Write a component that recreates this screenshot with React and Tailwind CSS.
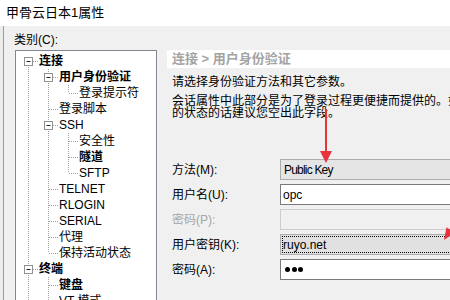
import React from 'react';

const rows = [
  { t: '连接', b: true, own: 'first', box: true, cols: [] },
  { t: '用户身份验证', b: true, own: 'mid', box: true, cols: ['pipe'] },
  { t: '登录提示符', own: 'last', cols: ['pipe', 'pipe'] },
  { t: '登录脚本', own: 'mid', cols: ['pipe'] },
  { t: 'SSH', own: 'mid', box: true, cols: ['pipe'] },
  { t: '安全性', own: 'mid', cols: ['pipe', 'pipe'] },
  { t: '隧道', b: true, own: 'mid', cols: ['pipe', 'pipe'] },
  { t: 'SFTP', own: 'last', cols: ['pipe', 'pipe'] },
  { t: 'TELNET', own: 'mid', cols: ['pipe'] },
  { t: 'RLOGIN', own: 'mid', cols: ['pipe'] },
  { t: 'SERIAL', own: 'mid', cols: ['pipe'] },
  { t: '代理', own: 'mid', cols: ['pipe'] },
  { t: '保持活动状态', own: 'last', cols: ['pipe'] },
  { t: '终端', b: true, own: 'mid', box: true, cols: [] },
  { t: '键盘', b: true, own: 'mid', cols: ['pipe'] },
  { t: 'VT 模式', own: 'mid', cols: ['pipe'] },
];

const DOT = '#a0a0a0';

// one 20x16 slot of the tree's dotted guide lines
const Guide = ({ type, own, box }) => (
  <svg width="20" height="16" className="shrink-0">
    {type === 'pipe' && (
      <line x1="10.5" y1="0" x2="10.5" y2="16" stroke={DOT} strokeDasharray="1 1" />
    )}
    {own && own !== 'first' && (
      <line x1="10.5" y1="0" x2="10.5" y2="8" stroke={DOT} strokeDasharray="1 1" />
    )}
    {own && own !== 'last' && (
      <line x1="10.5" y1="8" x2="10.5" y2="16" stroke={DOT} strokeDasharray="1 1" />
    )}
    {own && (
      <line x1="11" y1="8.5" x2="20" y2="8.5" stroke={DOT} strokeDasharray="1 1" />
    )}
    {box && (
      <>
        <rect x="6.5" y="4.5" width="8" height="8" fill="#fff" stroke="#919191" />
        <line x1="8.5" y1="8.5" x2="12.5" y2="8.5" stroke="#222" />
      </>
    )}
  </svg>
);

const Field = ({ label, disabled, kind, children }) => {
  const box =
    kind === 'combo'
      ? 'bg-[#e5e5e5] border-[#adadad] pl-[3px]'
      : kind === 'button'
      ? 'bg-[#e1e1e1] border-[#adadad] p-[1px] w-[168px]'
      : kind === 'off'
      ? 'bg-[#f0f0f0] border-[#cccccc]'
      : 'bg-white border-[#7a7a7a] pl-[2px]';
  return (
    <div className="flex items-center h-[21px]">
      <div className={`w-[113px] pl-[5px] text-[12px] leading-[16px] ${disabled ? 'text-[#a6a6a6]' : 'text-black'}`}>
        {label}
      </div>
      <div className={`h-[21px] flex-1 border flex items-center text-[12px] ${box}`}>
        {children}
      </div>
    </div>
  );
};

export default function App() {
  return (
    <div className="relative w-[450px] h-[300px] overflow-hidden bg-[#f0f0f0] text-black font-['Liberation_Sans','Noto_Sans_CJK_SC',sans-serif]">
      {/* title bar */}
      <div className="h-[26px] bg-white flex items-center pl-[6px] text-[13px] leading-[16px]">
        甲骨云日本1属性
      </div>

      <div className="flex h-[274px]">
        <div className="w-[3px] bg-[#ececec]" />
        <div className="flex-1 flex border-l border-[#9a9a9a] min-w-0">
          {/* category tree */}
          <div className="w-[153px] shrink-0 pl-[10px] pt-[6px]">
            <div className="text-[12px] leading-[16px]">类别(C):</div>
            <div className="mt-[2px] ml-[1px] w-[142px] h-[270px] bg-white border border-[#828790] pl-[2px] pt-[2px] overflow-hidden">
              {rows.map((r) => (
                <div key={r.t} className="flex items-center h-[16px]">
                  {r.cols.map((c, i) => (
                    <Guide key={i} type={c} />
                  ))}
                  <Guide own={r.own} box={r.box} />
                  <span className={`ml-[1px] text-[12px] leading-[16px] whitespace-nowrap ${r.b ? 'font-bold' : ''}`}>
                    {r.t}
                  </span>
                </div>
              ))}
            </div>
          </div>

          {/* settings page */}
          <div className="ml-[10px] w-[320px] shrink-0 pt-[24px]">
            <div className="h-[18px] bg-white pl-[5px] flex items-center text-[13px] font-bold text-[#a3a3a3] whitespace-nowrap">
              连接 &gt; 用户身份验证
            </div>
            <div className="pl-[5px] mt-[6px] text-[12px] leading-[16px] whitespace-nowrap">
              请选择身份验证方法和其它参数。
            </div>
            <div className="pl-[5px] mt-[5px] text-[12px] leading-[12px] whitespace-nowrap">
              <div>会话属性中此部分是为了登录过程更便捷而提供的。如果需要较高安全性</div>
              <div>的状态的话建议您空出此字段。</div>
            </div>

            <div className="mt-[40px] flex flex-col gap-[4px]">
              <Field label="方法(M):" kind="combo">
                <span className="tracking-[-0.8px]">Public Key</span>
              </Field>
              <Field label="用户名(U):">opc</Field>
              <Field label="密码(P):" disabled kind="off" />
              <Field label="用户密钥(K):" kind="button">
                <div className="h-full w-full border border-dotted border-black flex items-center">
                  ruyo.net
                </div>
              </Field>
              <Field label="密码(A):">
                <div className="flex gap-[1.5px] pl-[2px]">
                  <div className="w-[5px] h-[5px] rounded-full bg-black" />
                  <div className="w-[5px] h-[5px] rounded-full bg-black" />
                  <div className="w-[5px] h-[5px] rounded-full bg-black" />
                </div>
              </Field>
            </div>
          </div>
        </div>
      </div>

      {/* red annotation arrows */}
      <svg className="absolute inset-0 pointer-events-none" width="450" height="300">
        <line x1="326" y1="109" x2="326" y2="153" stroke="#e8333b" strokeWidth="2" />
        <polygon points="320,151 332,151 326,163" fill="#e8333b" />
        <line x1="450.7" y1="230" x2="470" y2="201" stroke="#e8333b" strokeWidth="2" />
        <polygon points="444,240 446.5,227.2 454.9,232.8" fill="#e8333b" />
      </svg>
    </div>
  );
}
